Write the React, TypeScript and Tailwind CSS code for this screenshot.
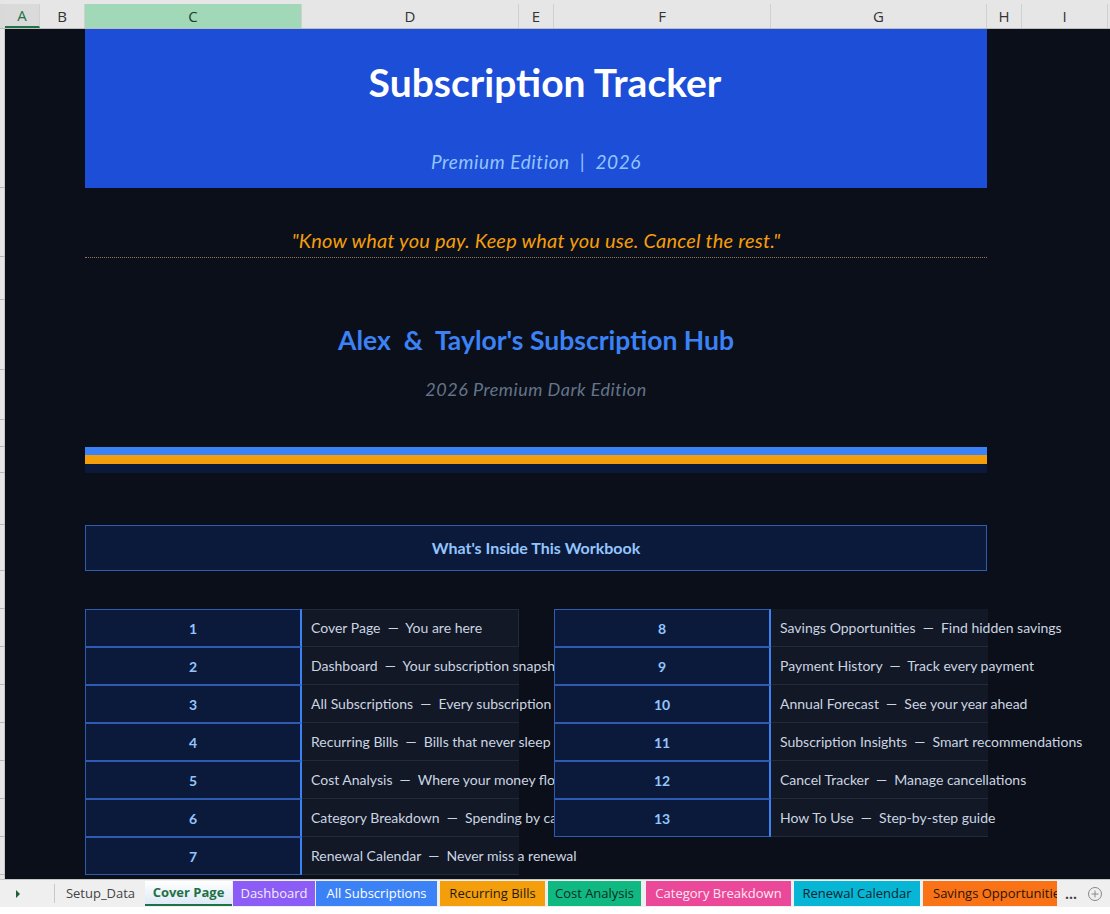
import React from 'react'

const cols = [
  { id: 'A', w: 35 },
  { id: 'B', w: 45 },
  { id: 'C', w: 217 },
  { id: 'D', w: 217 },
  { id: 'E', w: 35 },
  { id: 'F', w: 217 },
  { id: 'G', w: 216 },
  { id: 'H', w: 35 },
  { id: 'I', w: 86 },
]

const leftRows = [
  { n: 1, t: 'Cover Page  —  You are here' },
  { n: 2, t: 'Dashboard  —  Your subscription snapshot' },
  { n: 3, t: 'All Subscriptions  —  Every subscription in one place' },
  { n: 4, t: 'Recurring Bills  —  Bills that never sleep' },
  { n: 5, t: 'Cost Analysis  —  Where your money flows' },
  { n: 6, t: 'Category Breakdown  —  Spending by category' },
  { n: 7, t: 'Renewal Calendar  —  Never miss a renewal' },
]

const rightRows = [
  { n: 8, t: 'Savings Opportunities  —  Find hidden savings' },
  { n: 9, t: 'Payment History  —  Track every payment' },
  { n: 10, t: 'Annual Forecast  —  See your year ahead' },
  { n: 11, t: 'Subscription Insights  —  Smart recommendations' },
  { n: 12, t: 'Cancel Tracker  —  Manage cancellations' },
  { n: 13, t: 'How To Use  —  Step-by-step guide' },
]

const tabs = [
  { label: 'Setup_Data', cls: 'text-[#444] w-[85px] ml-[3px]' },
  { label: 'Cover Page', cls: 'bg-gradient-to-b from-white to-[#dfe9f7] text-[#1e7145] font-bold border-b-2 border-[#1e7145] w-[87px] ml-[2px]' },
  { label: 'Dashboard', cls: 'bg-[#8b5cf6] text-[#f3eaff] w-[82px] ml-[1px]' },
  { label: 'All Subscriptions', cls: 'bg-[#3b82f6] text-white w-[121px] ml-[1px]' },
  { label: 'Recurring Bills', cls: 'bg-[#f59e0b] text-[#1f1a10] w-[105px] ml-[3px]' },
  { label: 'Cost Analysis', cls: 'bg-[#10b981] text-[#0f2a22] w-[93px] ml-[3px]' },
  { label: 'Category Breakdown', cls: 'bg-[#ec4899] text-[#fde7f3] w-[145px] ml-[5px]' },
  { label: 'Renewal Calendar', cls: 'bg-[#06b6d4] text-[#0b2530] w-[126px] ml-[3px]' },
  { label: 'Savings Opportunities', cls: 'bg-[#f97316] text-[#2a1405] w-[134px] ml-[3px] justify-start pl-[10px]' },
]

// row boundaries (page y) used for the tiny row-header strip on the left
const ticks = [188, 257, 300, 370, 420, 447, 473, 525, 571, 609, 647, 685, 723, 761, 799, 837, 875]

const cell = { fontFamily: 'Lato, "Open Sans", sans-serif' }

function NumCell({ n }: { n: number }) {
  return (
    <div className="w-[217px] h-full shrink-0 flex items-center justify-center bg-[#0b1a3b] border border-[#2f5bb0] border-r-2 border-r-[#3b82f6] text-[#93c5fd] font-bold text-[14px]">
      {n}
    </div>
  )
}

function DescCell({ t, width, clip, first }: { t: string; width: number; clip: boolean; first?: boolean }) {
  return (
    <div
      className={`relative h-full shrink-0 ${clip ? 'overflow-hidden' : ''}`}
      style={{ width }}
    >
      <div
        className={`w-[217px] h-full bg-[#121826] border-b border-[#232b3b] ${first ? 'border-t border-r' : ''}`}
      />
      <span className="absolute left-[9px] top-0 leading-[38px] whitespace-pre text-[14px] text-[#cbd5e1]">
        {t}
      </span>
    </div>
  )
}

export default function App() {
  return (
    <div className="w-[1110px] h-[914px] flex flex-col bg-[#e6e6e6] overflow-hidden" style={cell}>
      {/* column headers */}
      <div className="h-[29px] flex shrink-0 pt-[4px] bg-[#e6e6e6] border-b border-[#bdbdbd]" style={{ fontFamily: '"Open Sans", sans-serif' }}>
        <div className="w-[5px] shrink-0 bg-[#d9d9d9]" />
        {cols.map((c) => (
          <div
            key={c.id}
            style={{ width: c.w }}
            className={`shrink-0 flex items-center justify-center text-[15px] border-r border-[#d0d0d0] ${
              c.id === 'C'
                ? 'bg-[#a0d8b8] text-[#1f3b2c]'
                : c.id === 'A'
                ? 'bg-[#dadada] text-[#217346] border-b-2 border-b-[#217346]'
                : 'text-[#333]'
            }`}
          >
            {c.id}
          </div>
        ))}
        <div className="flex-1" />
      </div>

      {/* sheet body */}
      <div className="flex-1 flex min-h-0">
        <div className="w-[5px] shrink-0 relative bg-[#e6e6e6] border-r border-[#c8c8c8]">
          {ticks.map((y) => (
            <div key={y} className="absolute left-0 w-[5px] h-px bg-[#b8b8b8]" style={{ top: y - 30 }} />
          ))}
        </div>
        <div className="flex-1 bg-[#0b0f19] pl-[80px] overflow-hidden">
          <div className="w-[902px]">
            {/* banner */}
            <div className="h-[159px] bg-[#1d4ed8] flex flex-col items-center pt-[30px]">
              <div className="pl-[18px] text-white font-bold text-[39px] leading-[46px]">Subscription Tracker</div>
              <div className="mt-[45px] text-[#93c5fd] italic text-[19px] leading-[24px] tracking-[0.6px] whitespace-pre">
                Premium Edition  |  2026
              </div>
            </div>

            {/* quote */}
            <div className="mt-[40px] text-center text-[#f59e0b] italic text-[20px] leading-[24px] tracking-[0.2px]">
              "Know what you pay. Keep what you use. Cancel the rest."
            </div>
            <div className="mt-[5px] border-t border-dotted border-[#8c7a55]" />

            {/* hub title */}
            <div className="mt-[65px] text-center text-[#3b82f6] font-bold text-[26.5px] leading-[34px] whitespace-pre">
              Alex  &  Taylor's Subscription Hub
            </div>
            <div className="mt-[20px] text-center text-[#64748b] italic text-[18px] leading-[24px] tracking-[0.5px]">
              2026 Premium Dark Edition
            </div>

            {/* stripes */}
            <div className="mt-[46px]">
              <div className="h-[8px] bg-[#3b82f6]" />
              <div className="h-[9px] bg-[#f59e0b]" />
              <div className="h-[9px] bg-[#0b1a3b]" />
            </div>

            {/* what's inside */}
            <div className="mt-[52px] h-[46px] bg-[#0b1a3b] border border-[#2f5bb0] flex items-center justify-center text-[#93c5fd] font-bold text-[16px]">
              What's Inside This Workbook
            </div>

            {/* index table */}
            <div className="mt-[38px] flex flex-col">
              {leftRows.map((l, i) => {
                const r = rightRows[i]
                return (
                  <div key={l.n} className="h-[38px] flex">
                    <NumCell n={l.n} />
                    <DescCell t={l.t} width={252} clip={!!r} first={i === 0} />
                    {r && (
                      <>
                        <NumCell n={r.n} />
                        <DescCell t={r.t} width={216} clip={false} />
                      </>
                    )}
                  </div>
                )
              })}
            </div>
          </div>
        </div>
      </div>

      {/* sheet tabs */}
      <div className="h-[28px] shrink-0 flex items-stretch bg-[#efefef] border-t border-[#c6c6c6]" style={{ fontFamily: '"Open Sans", sans-serif' }}>
        <div className="w-[55px] shrink-0 flex items-center justify-center border-r border-[#c8c8c8] my-[4px]">
          <svg width="8" height="10" viewBox="0 0 8 10" className="mr-[18px]">
            <path d="M2 1 L6 5 L2 9 Z" fill="#1e5e3a" />
          </svg>
        </div>
        <div className="flex items-stretch pt-[1px] pb-[1px]">
          {tabs.map((t) => (
            <div
              key={t.label}
              className={`shrink-0 flex items-center justify-center text-[13px] whitespace-nowrap overflow-hidden ${t.cls}`}
            >
              {t.label}
            </div>
          ))}
        </div>
        <div className="w-[28px] flex items-center justify-center text-[#444] text-[14px] font-bold">…</div>
        <div className="flex items-center pl-[2px]">
          <svg width="16" height="16" viewBox="0 0 16 16">
            <circle cx="8" cy="8" r="6.5" fill="none" stroke="#888" strokeWidth="1" />
            <path d="M8 4.5 V11.5 M4.5 8 H11.5" stroke="#888" strokeWidth="1" />
          </svg>
        </div>
      </div>
      <div className="h-[7px] shrink-0 bg-white" />
    </div>
  )
}
